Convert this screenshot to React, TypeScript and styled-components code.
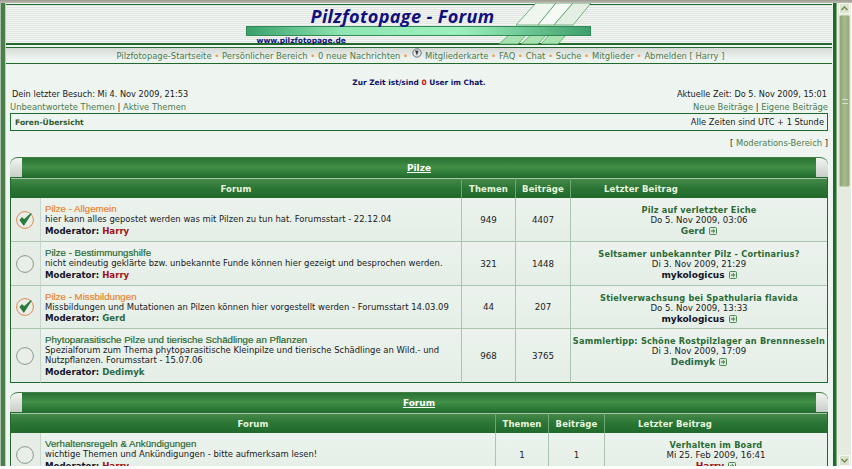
import React from "react";
import styled, { createGlobalStyle } from "styled-components";

const Global = createGlobalStyle`
  html, body { margin: 0; padding: 0; height: 100%; overflow: hidden; background: #fff; }
  * { box-sizing: border-box; }
`;
const Viewport = styled.div`
  width: 852px; height: 469px; overflow: hidden; display: flex; flex-direction: column;
  font-family: "DejaVu Sans", Verdana, sans-serif; font-size: 8.45px; color: #1a1a1a;
  background: #fff;
`;
const TopEdge = styled.div`height: 3px; flex: none; background: linear-gradient(#9a9a90, #bdbdb5);`;
const Frame = styled.div`height: 463px; flex: none; display: flex; overflow: hidden;`;
const LeftRail = styled.div`width: 6px; flex: none; background: linear-gradient(90deg, #a9bfa9 0 1px, #4a7f4a 1px 5px, #b9d0b9 5px);`;
const RightRail = styled.div`width: 6px; flex: none; background: linear-gradient(90deg, #e9f2ec 0 1px, #1f6a2c 1px 4px, #7fa97f 4px 5px, #e8efe8 5px);`;
const Page = styled.div`
  width: 826px; flex: none; background: #eef5f0; display: flex; flex-direction: column; overflow: hidden;
  & > * { flex: none; }
`;
const Banner = styled.header`
  height: 41px; display: flex; justify-content: center; margin-top: 1px;
  border-top: 1px solid #1f6a2c; border-bottom: 2px solid #1f6a2c;
  background: repeating-linear-gradient(#e2e6e2 0 1px, #f3f5f3 1px 2px);
`;
const Logo = styled.div`position: relative; width: 345px; height: 38px; margin-left: -2px;`;
const LogoTitle = styled.div`
  position: absolute; left: 65px; top: -1px; white-space: nowrap; z-index: 2;
  font: italic bold 18.1px "Open Sans", "DejaVu Sans", sans-serif; letter-spacing: .35px; color: #10107e;
`;
const LogoBar = styled.div`
  position: absolute; left: 0; top: 21px; width: 345px; height: 10px; z-index: 1;
  border: 1px solid #2f8a55;
  background: linear-gradient(90deg, #39a06a 0, #8fe6b2 28%, #9cf0bd 62%, #3f9f6c 100%);
`;
const LogoUrl = styled.div`
  position: absolute; left: 11px; top: 31px; z-index: 2; white-space: nowrap;
  font: bold 7.5px "DejaVu Sans", sans-serif; color: #10107e;
`;
const LogoStripes = styled.svg`position: absolute; left: 245px; top: -4px; z-index: 0;`;
const NavBar = styled.nav`
  height: 17px; margin-top: 2px; display: flex; justify-content: center; align-items: center; gap: 2px;
  border-top: 1px solid #1f6a2c; border-bottom: 1px solid #1f6a2c;
  background: linear-gradient(#d6dad6, #edf3ee 70%);
  color: #4d7a4d; font-size: 8.4px; white-space: nowrap; padding-left: 3px;
`;
const Dot = styled.span`color: #f0a050; font-size: 9px; padding: 0 .6px;`;
const Globe = styled.svg`margin: -5px 1px 0 1px;`;
const ChatLine = styled.div`
  margin-top: 14px; text-align: center; font-weight: bold; font-size: 7.4px; line-height: 10px; color: #10106a;
  span { color: #d01010; }
`;
const Row = styled.div`display: flex; justify-content: space-between; padding: 0 4px 0 4px;`;
const VisitRow = styled(Row)`margin-top: 1px; padding-left: 6px; padding-right: 5px; font-size: 8.2px; line-height: 11px;`;
const LinkRow = styled(Row)`margin-top: 2px; font-size: 8.4px; line-height: 11px; color: #4d7a4d; b { font-weight: normal; color: #1a1a1a; }`;
const Crumb = styled.div`
  margin: 0 4px 0 4px; height: 18px; border: 1px solid #1f6a2c; display: flex; justify-content: space-between; align-items: center;
  padding: 0 3px 0 4px; font-size: 8.3px;
  strong { color: #2f5a2f; font-size: 7.6px; }
`;
const ModLine = styled.div`
  margin-top: 6px; text-align: right; padding-right: 4px; font-size: 8.4px; line-height: 13px; color: #1a1a1a;
  span { color: #4d7a4d; }
`;
const Forums = styled.section<{ $top: number }>`margin: ${p => p.$top}px 4px 0 4px;`;
const CatHead = styled.div`
  position: relative; height: 21px; display: flex; align-items: center; justify-content: center;
  border-radius: 8px 8px 0 0; border-top: 1px solid #3f7f45;
  background: linear-gradient(#2a7233, #418f47 45%, #1f6a2c);
  color: #fff; font: bold 9px "DejaVu Sans", sans-serif; text-decoration: underline; overflow: hidden;
`;
const Corner = styled.i<{ $side: string }>`
  position: absolute; top: 0; ${p => p.$side}: 0; width: 12px; height: 19px;
  background: linear-gradient(#f2f4f2, #c9cec9);
`;
const Grid = styled.div<{ $cols: string }>`
  display: grid; grid-template-columns: ${p => p.$cols};
  border-left: 1px solid #1f6a2c; border-right: 1px solid #1f6a2c;
`;
const Th = styled.div<{ $left?: boolean; $div?: boolean; $span?: string }>`
  height: 20px; display: flex; align-items: center; justify-content: ${p => p.$left ? "flex-start" : "center"};
  padding-left: ${p => p.$left ? 33 : 0}px;
  background: linear-gradient(#44894a, #2b7534 50%, #1f6a2c);
  border-left: ${p => p.$div ? "1px solid #6ea574" : "0"};
  border-top: 1px solid #a7c7a7;
  color: #e8f5df; font: bold 8.5px "DejaVu Sans", sans-serif;
  letter-spacing: .1px;
  grid-column: ${p => p.$span || "auto"};
`;
const Td = styled.div<{ $h: number; $last?: boolean; $div?: boolean }>`
  min-width: 0;
  height: ${p => p.$h}px; border-bottom: 1px solid ${p => p.$last ? "#1f6a2c" : "#a9c6ae"};
  border-left: ${p => p.$div ? "1px solid #a9c6ae" : "0"};
  background: linear-gradient(#ecf3ee, #e4ede6);
`;
const IconCell = styled(Td)`display: flex; align-items: center; justify-content: center; background: #e6ede7; border-right: 1px solid #c9d6cb; padding-right: 1px;`;
const InfoCell = styled(Td)`display: flex; flex-direction: column; justify-content: flex-start; padding: 5px 0 0 4px; line-height: 10px; font-size: 8.45px;`;
const CountCell = styled(Td)`display: flex; align-items: center; justify-content: center; font-size: 8.7px; color: #222;`;
const LastCell = styled(Td)`display: flex; flex-direction: column; align-items: center; padding-top: 7px; line-height: 10px; font-size: 8.6px; color: #222;`;
const ForumName = styled.div<{ $isNew: boolean }>`
  font: 9.7px/11px "Liberation Sans", Arial, sans-serif; -webkit-text-stroke: .2px; color: ${p => p.$isNew ? "#e8862e" : "#2c6b34"};
  white-space: nowrap;
`;
const Desc = styled.div`white-space: pre-line; color: #1a1a1a;`;
const Mod = styled.div`margin-top: auto; margin-bottom: 5px; font-weight: bold; color: #14142a; font-size: 8.6px;`;
const ModName = styled.span<{ $admin: boolean }>`color: ${p => p.$admin ? "#a01020" : "#2c6b44"};`;
const PostTitle = styled.div`font-weight: bold; font-size: 8.2px; color: #2c6b34; letter-spacing: .2px; white-space: nowrap;`;
const Poster = styled.div<{ $c: string }>`font-weight: bold; font-size: 9px; margin-top: 1px; display: flex; align-items: center; gap: 4px; color: ${p => p.$c};`;
const Scroll = styled.aside`width: 13px; flex: none; display: flex; flex-direction: column; background: #e6ebdf; padding: 0 1px;`;
const ScrollBtn = styled.div`height: 11px; flex: none; background: #dbe3cf; border: 1px solid #f5f7f0; display: flex; align-items: center; justify-content: center;`;
const Thumb = styled.div`
  height: 172px; flex: none; margin-top: 1px; background: linear-gradient(90deg, #8fa474, #a9bb8d 50%, #93a97a);
  border-radius: 2px; border: 1px solid #bfcdab; display: flex; align-items: center; justify-content: center;
`;
const Grip = styled.i`width: 6px; height: 5px; border-top: 1px solid #d5dfc5; border-bottom: 1px solid #d5dfc5;`;
const Track = styled.div`flex: 1;`;
const EndRail = styled.div`width: 1px; flex: none; background: #fff;`;

const ForumIcon = ({ isNew }: { isNew: boolean }) => (
  <svg width="20" height="20" viewBox="0 0 20 20">
    <circle cx="10" cy="10" r="8.4" fill="#e9eee9" stroke={isNew ? "#e28a4a" : "#8a9a8c"} strokeWidth="1" />
    {isNew && <path d="M5.2 10.2 L8.8 15 L16 3.8 L9.2 10 L7 7.8 Z" fill="#2c7a3c" stroke="#2c7a3c" strokeWidth="1.2" strokeLinejoin="round" />}
  </svg>
);
const GoIcon = () => (
  <svg width="8" height="8" viewBox="0 0 8 8">
    <rect x=".5" y=".5" width="7" height="7" rx="1" fill="#dbe9dc" stroke="#4d8a55" />
    <path d="M2 4h3M4 2.4 5.7 4 4 5.6" fill="none" stroke="#2c6b34" />
  </svg>
);

type Item = { name: string; isNew: boolean; desc: string; mod: string; admin: boolean; t: string; b: string; post: string; date: string; by: string; c: string; h: number; last?: boolean };
const first: Item[] = [
  { name: "Pilze - Allgemein", isNew: true, desc: "hier kann alles gepostet werden was mit Pilzen zu tun hat. Forumsstart - 22.12.04", mod: "Harry", admin: true, t: "949", b: "4407", post: "Pilz auf verletzter Eiche", date: "Do 5. Nov 2009, 03:06", by: "Gerd", c: "#2c6b44", h: 44 },
  { name: "Pilze - Bestimmungshilfe", isNew: false, desc: "nicht eindeutig geklärte bzw. unbekannte Funde können hier gezeigt und besprochen werden.", mod: "Harry", admin: true, t: "321", b: "1448", post: "Seltsamer unbekannter Pilz - Cortinarius?", date: "Di 3. Nov 2009, 21:29", by: "mykologicus", c: "#14142a", h: 44 },
  { name: "Pilze - Missbildungen", isNew: true, desc: "Missbildungen und Mutationen an Pilzen können hier vorgestellt werden - Forumsstart 14.03.09", mod: "Gerd", admin: false, t: "44", b: "207", post: "Stielverwachsung bei Spathularia flavida", date: "Do 5. Nov 2009, 13:33", by: "mykologicus", c: "#14142a", h: 43 },
  { name: "Phytoparasitische Pilze und tierische Schädlinge an Pflanzen", isNew: false, desc: "Spezialforum zum Thema phytoparasitische Kleinpilze und tierische Schädlinge an Wild.- und\nNutzpflanzen. Forumsstart - 15.07.06", mod: "Dedimyk", admin: false, t: "968", b: "3765", post: "Sammlertipp: Schöne Rostpilzlager an Brennnesseln", date: "Di 3. Nov 2009, 17:09", by: "Dedimyk", c: "#2c6b44", h: 54, last: true },
];
const second: Item[] = [
  { name: "Verhaltensregeln & Ankündigungen", isNew: false, desc: "wichtige Themen und Ankündigungen - bitte aufmerksam lesen!", mod: "Harry", admin: true, t: "1", b: "1", post: "Verhalten im Board", date: "Mi 25. Feb 2009, 16:41", by: "Harry", c: "#a01020", h: 44 },
];

const Category = ({ title, cols, items, top }: { title: string; cols: string; items: Item[]; top: number }) => (
  <Forums $top={top}>
    <CatHead><Corner $side="left" /><Corner $side="right" />{title}</CatHead>
    <Grid $cols={cols}>
      <Th $span="span 2">Forum</Th>
      <Th $div>Themen</Th>
      <Th $div>Beiträge</Th>
      <Th $div $left>Letzter Beitrag</Th>
      {items.map(i => (
        <React.Fragment key={i.name}>
          <IconCell $h={i.h} $last={i.last}><ForumIcon isNew={i.isNew} /></IconCell>
          <InfoCell $h={i.h} $last={i.last}>
            <ForumName $isNew={i.isNew}>{i.name}</ForumName>
            <Desc>{i.desc}</Desc>
            <Mod>Moderator: <ModName $admin={i.admin}>{i.mod}</ModName></Mod>
          </InfoCell>
          <CountCell $h={i.h} $last={i.last} $div>{i.t}</CountCell>
          <CountCell $h={i.h} $last={i.last} $div>{i.b}</CountCell>
          <LastCell $h={i.h} $last={i.last} $div>
            <PostTitle>{i.post}</PostTitle>
            <div>{i.date}</div>
            <Poster $c={i.c}>{i.by} <GoIcon /></Poster>
          </LastCell>
        </React.Fragment>
      ))}
    </Grid>
  </Forums>
);

export default function App() {
  return (
    <Viewport>
      <Global />
      <TopEdge />
      <Frame>
        <LeftRail />
        <Page>
          <Banner>
            <Logo>
              <LogoStripes width="100" height="44" viewBox="0 0 100 44">
                <g stroke="#3f9a55" strokeWidth=".7">
                  <path d="M25 24 L45 2 L65 2 L47 24 Z" fill="#eef6ee" />
                  <path d="M47 24 L65 2 L82 2 L63 24 Z" fill="#f6faf6" />
                  <path d="M63 24 L82 2 L100 2 L82 24 Z" fill="#e4efe4" />
                  <path d="M8 43 L18 34 L35 34 L27 43 Z" fill="#a8e2b0" />
                  <path d="M30 43 L40 34 L55 34 L47 43 Z" fill="#a8e2b0" />
                  <path d="M50 43 L58 34 L75 34 L67 43 Z" fill="#a8e2b0" />
                </g>
              </LogoStripes>
              <LogoTitle>Pilzfotopage - Forum</LogoTitle>
              <LogoBar />
              <LogoUrl>www.pilzfotopage.de</LogoUrl>
            </Logo>
          </Banner>
          <NavBar>
            <span>Pilzfotopage-Startseite</span><Dot>•</Dot>
            <span>Persönlicher Bereich</span><Dot>•</Dot>
            <span>0 neue Nachrichten</span><Dot>•</Dot>
            <Globe width="10" height="10" viewBox="0 0 10 10">
              <circle cx="5" cy="5" r="4.2" fill="#dfe6e2" stroke="#556" strokeWidth=".8" />
              <path d="M3 2.6 6.5 2.8 5 7.6Z" fill="#334" />
            </Globe>
            <span>Mitgliederkarte</span><Dot>•</Dot>
            <span>FAQ</span><Dot>•</Dot>
            <span>Chat</span><Dot>•</Dot>
            <span>Suche</span><Dot>•</Dot>
            <span>Mitglieder</span><Dot>•</Dot>
            <span>Abmelden [ Harry ]</span>
          </NavBar>
          <ChatLine>Zur Zeit ist/sind <span>0</span> User im Chat.</ChatLine>
          <VisitRow><span>Dein letzter Besuch: Mi 4. Nov 2009, 21:53</span><span>Aktuelle Zeit: Do 5. Nov 2009, 15:01</span></VisitRow>
          <LinkRow>
            <span>Unbeantwortete Themen <b>|</b> Aktive Themen</span>
            <span>Neue Beiträge <b>|</b> Eigene Beiträge</span>
          </LinkRow>
          <Crumb><strong>Foren-Übersicht</strong><span>Alle Zeiten sind UTC + 1 Stunde</span></Crumb>
          <ModLine>[ <span>Moderations-Bereich</span> ]</ModLine>
          <Category title="Pilze" top={7} cols="30px 420px 54px 55px 1fr" items={first} />
          <Category title="Forum" top={9} cols="30px 454px 53px 56px 1fr" items={second} />
        </Page>
        <RightRail />
        <Scroll>
          <ScrollBtn><svg width="7" height="5" viewBox="0 0 7 5"><path d="M.5 4 3.5 1 6.5 4" fill="none" stroke="#6f8758" strokeWidth="1.4" /></svg></ScrollBtn>
          <Thumb><Grip /></Thumb>
          <Track />
          <ScrollBtn><svg width="7" height="5" viewBox="0 0 7 5"><path d="M.5 1 3.5 4 6.5 1" fill="none" stroke="#6f8758" strokeWidth="1.4" /></svg></ScrollBtn>
        </Scroll>
        <EndRail />
      </Frame>
    </Viewport>
  );
}
